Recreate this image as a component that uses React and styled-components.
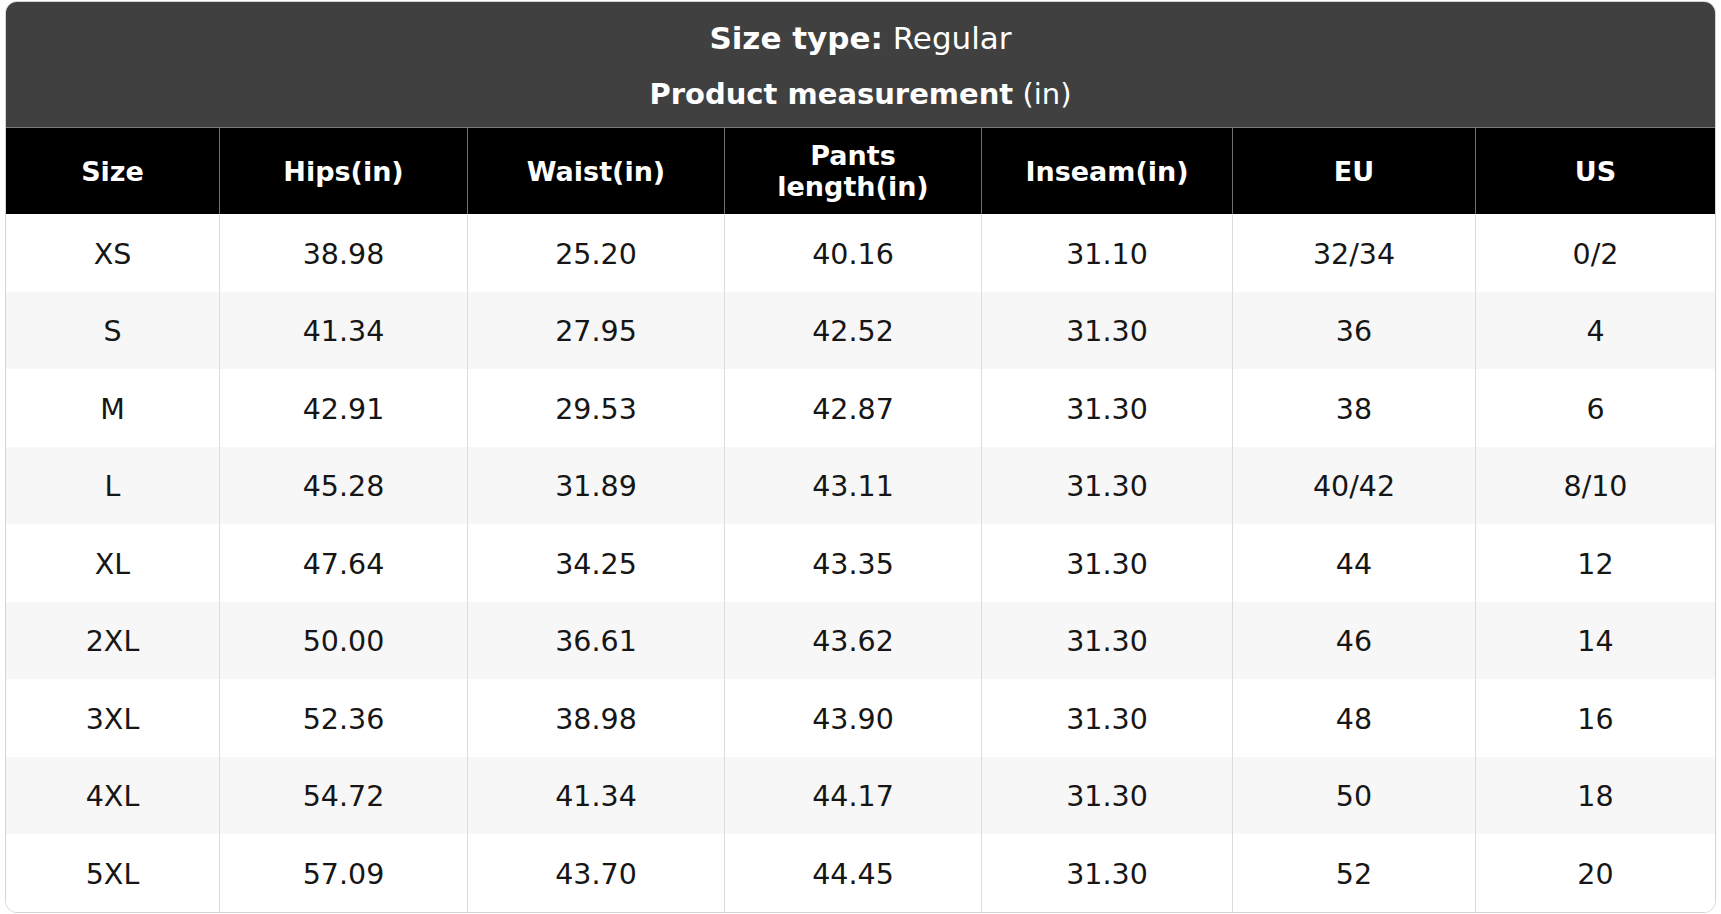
import React from "react";
import styled, { createGlobalStyle } from "styled-components";

const GlobalStyle = createGlobalStyle`
  html, body {
    margin: 0;
    padding: 0;
    background: #ffffff;
  }
  body {
    font-family: "DejaVu Sans", "Liberation Sans", sans-serif;
    color: #111111;
  }
`;

const Card = styled.div`
  box-sizing: border-box;
  width: 1711px;
  margin: 1px 5px 2px 5px;
  border: 1px solid #d4d4d4;
  border-radius: 12px;
  overflow: hidden;
  background: #ffffff;
`;

const Banner = styled.div`
  box-sizing: border-box;
  height: 126px;
  padding-top: 2px;
  background: #404040;
  border-bottom: 1px solid #7a7a7a;
  display: flex;
  flex-direction: column;
  align-items: center;
  justify-content: center;
  color: #ffffff;
  line-height: 56px;
`;

const BannerLine = styled.div`
  white-space: nowrap;
  font-size: ${(p) => p.$size || 29}px;
  b {
    font-weight: 700;
  }
`;

const COLUMNS = "214px 248px 257px 257px 251px 243px 239px";

const Row = styled.div`
  display: grid;
  grid-template-columns: ${COLUMNS};
  height: ${(p) => (p.$head ? "86px" : "77.5px")};
  background: ${(p) => (p.$head ? "#000000" : p.$shaded ? "#f7f7f7" : "#ffffff")};
`;

const Cell = styled.div`
  box-sizing: border-box;
  display: flex;
  align-items: center;
  justify-content: center;
  text-align: center;
  padding-top: ${(p) => (p.$head ? 0 : 3)}px;
  font-size: ${(p) => (p.$head ? 27 : 28.5)}px;
  line-height: 31px;
  font-weight: ${(p) => (p.$head ? 700 : 400)};
  color: ${(p) => (p.$head ? "#ffffff" : "#161616")};
  border-right: 1px solid ${(p) => (p.$head ? "#6e6e6e" : "#dcdcdc")};
  &:last-child {
    border-right: none;
  }
`;

const headers = [
  "Size",
  "Hips(in)",
  "Waist(in)",
  <>Pants<br />length(in)</>,
  "Inseam(in)",
  "EU",
  "US",
];

const rows = [
  ["XS", "38.98", "25.20", "40.16", "31.10", "32/34", "0/2"],
  ["S", "41.34", "27.95", "42.52", "31.30", "36", "4"],
  ["M", "42.91", "29.53", "42.87", "31.30", "38", "6"],
  ["L", "45.28", "31.89", "43.11", "31.30", "40/42", "8/10"],
  ["XL", "47.64", "34.25", "43.35", "31.30", "44", "12"],
  ["2XL", "50.00", "36.61", "43.62", "31.30", "46", "14"],
  ["3XL", "52.36", "38.98", "43.90", "31.30", "48", "16"],
  ["4XL", "54.72", "41.34", "44.17", "31.30", "50", "18"],
  ["5XL", "57.09", "43.70", "44.45", "31.30", "52", "20"],
];

export default function App() {
  return (
    <>
      <GlobalStyle />
      <Card>
        <Banner>
          <BannerLine $size={31}>
            <b>Size type:</b> Regular
          </BannerLine>
          <BannerLine $size={29}>
            <b>Product measurement</b> (in)
          </BannerLine>
        </Banner>

        <Row $head>
          {headers.map((h, i) => (
            <Cell $head key={i}>
              {h}
            </Cell>
          ))}
        </Row>

        {rows.map((r, i) => (
          <Row key={r[0]} $shaded={i % 2 === 1}>
            {r.map((v, j) => (
              <Cell key={j}>{v}</Cell>
            ))}
          </Row>
        ))}
      </Card>
    </>
  );
}
